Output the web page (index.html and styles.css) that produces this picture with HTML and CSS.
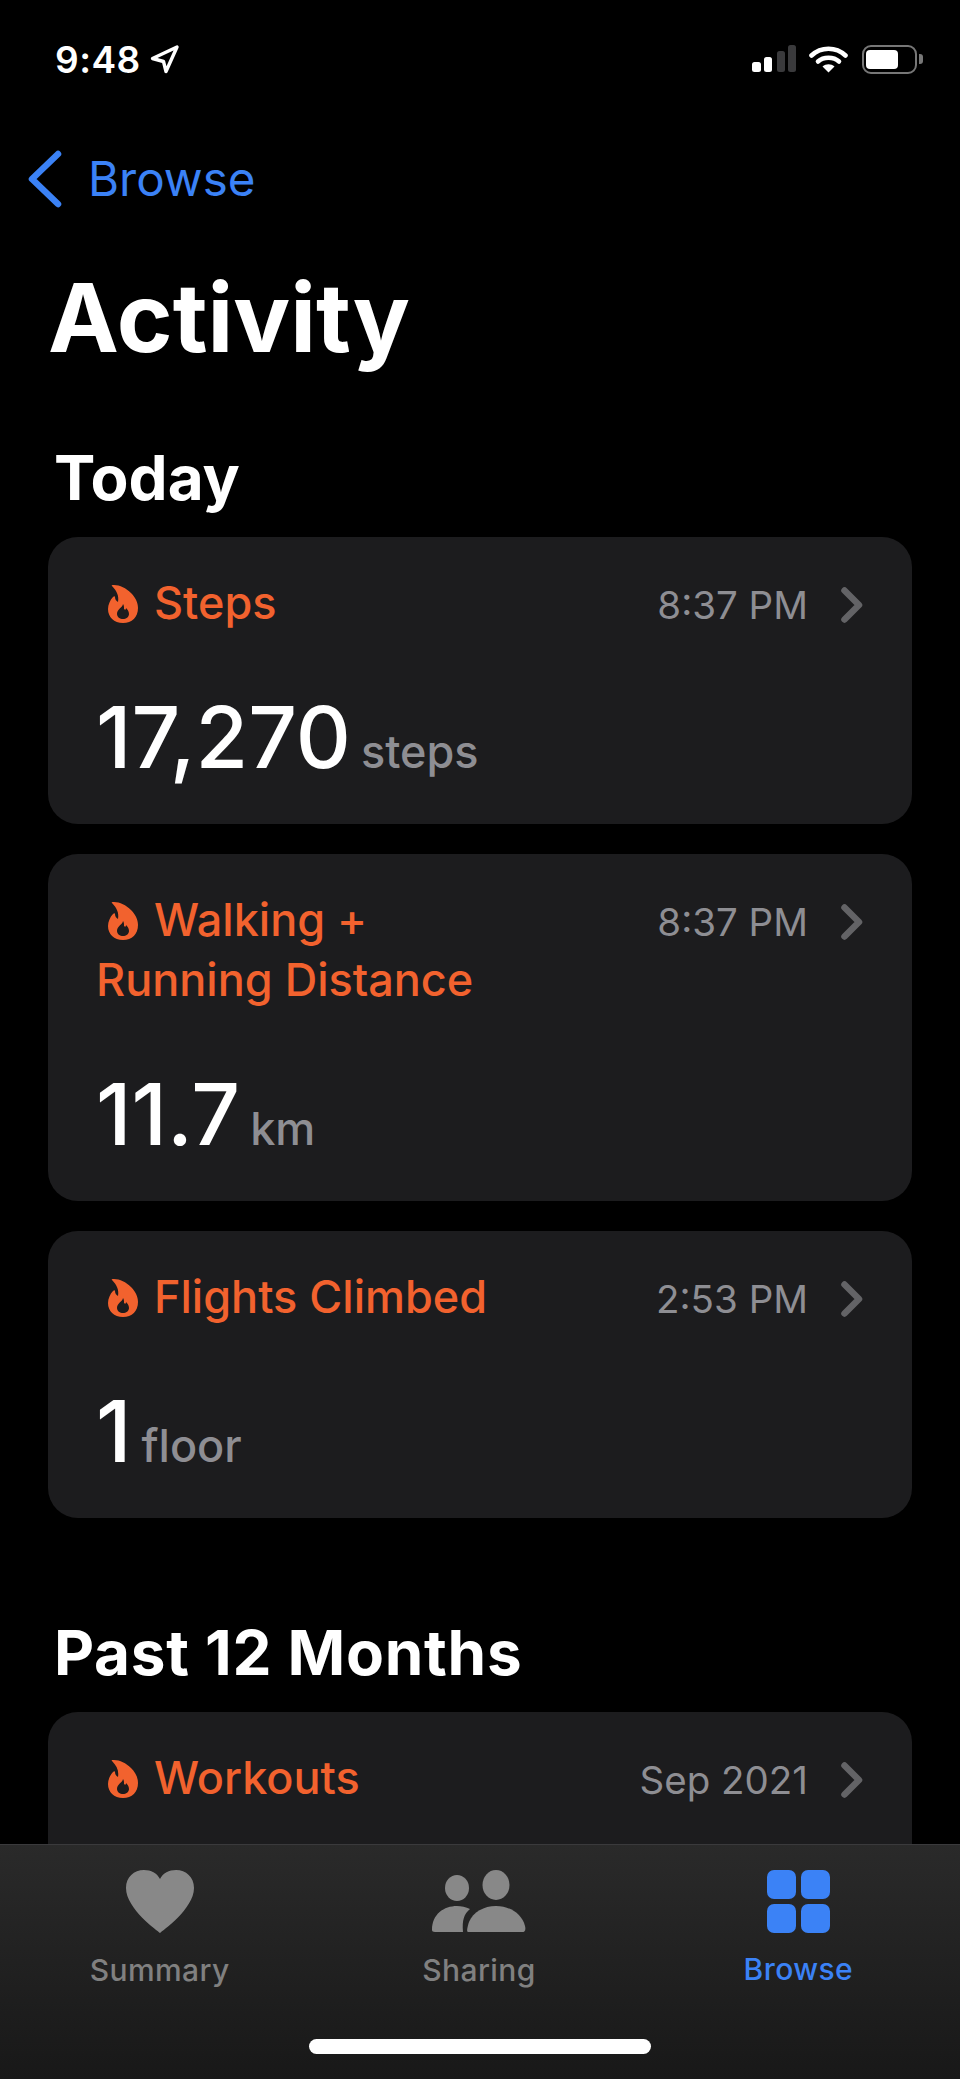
FILE: index.html
```html
<!DOCTYPE html>
<html lang="en">
<head>
<meta charset="UTF-8">
<meta name="viewport" content="width=device-width, initial-scale=1.0">
<title>Activity</title>
<link rel="stylesheet" href="styles.css">
</head>
<body>
<div class="phone">
	<div class="status">
		<div class="status-left">
			<span class="clock">9:48</span>
			<svg class="loc" viewBox="0 0 30 30"><path d="M2.500 14.500 27 3 16 27.500 13.500 17.500Z" fill="none" stroke="#fff" stroke-width="3.400" stroke-linejoin="round"/></svg>
		</div>
		<div class="status-right">
			<svg class="signal" viewBox="0 0 44 28"><rect x="0" y="17" width="9" height="10" rx="2.500" fill="#fff"/><rect x="12" y="12" width="8" height="15" rx="2.500" fill="#fff"/><rect x="25" y="6" width="8" height="21" rx="2.500" fill="#3a3a3c"/><rect x="36" y="0" width="8" height="27" rx="2.500" fill="#3a3a3c"/></svg>
			<svg class="wifi" viewBox="0 0 38 28"><path d="M2 10.500C11.500 1.500 26.500 1.500 36 10.500" fill="none" stroke="#fff" stroke-width="4.600" stroke-linecap="round"/><path d="M8.500 16.500C14 11.500 24 11.500 29.500 16.500" fill="none" stroke="#fff" stroke-width="4.600" stroke-linecap="round"/><path d="M13 21.500C16.500 18.500 21.500 18.500 25 21.500L19 27.500Z" fill="#fff"/></svg>
			<div class="battery"><div class="battery-fill"></div></div>
			<div class="battery-cap"></div>
		</div>
	</div>

	<a class="back">
		<svg class="back-icon" viewBox="0 0 36 58"><path d="M31 4 5 29 31 54" fill="none" stroke="#3b82f6" stroke-width="6.500" stroke-linecap="round" stroke-linejoin="round"/></svg>
		<span>Browse</span>
	</a>

	<h1 class="title">Activity</h1>

	<h2 class="section">Today</h2>
	<div class="card">
		<div class="card-head">
			<div class="card-title"><svg class="flame"><use href="#flame"/></svg>Steps</div>
			<div class="card-meta"><span>8:37 PM</span><svg class="chev"><use href="#chev"/></svg></div>
		</div>
		<div class="card-value"><b>17,270</b><span>steps</span></div>
	</div>
	<div class="card">
		<div class="card-head">
			<div class="card-title"><svg class="flame"><use href="#flame"/></svg>Walking +<br>Running Distance</div>
			<div class="card-meta"><span>8:37 PM</span><svg class="chev"><use href="#chev"/></svg></div>
		</div>
		<div class="card-value"><b>11.7</b><span>km</span></div>
	</div>
	<div class="card">
		<div class="card-head">
			<div class="card-title"><svg class="flame"><use href="#flame"/></svg>Flights Climbed</div>
			<div class="card-meta"><span>2:53 PM</span><svg class="chev"><use href="#chev"/></svg></div>
		</div>
		<div class="card-value"><b>1</b><span>floor</span></div>
	</div>

	<h2 class="section section-months">Past 12 Months</h2>
	<div class="card card-cut">
		<div class="card-head">
			<div class="card-title"><svg class="flame"><use href="#flame"/></svg>Workouts</div>
			<div class="card-meta"><span>Sep 2021</span><svg class="chev"><use href="#chev"/></svg></div>
		</div>
	</div>

	<div class="tabbar">
		<div class="tabs">
			<div class="tab">
				<svg class="tab-icon" viewBox="0 0 70 64"><path d="M35 63C33 61 1 39 1 18 1 7 9 0 19 0 26 0 32 3 35 9 38 3 44 0 51 0 61 0 69 7 69 18 69 39 37 61 35 63Z" fill="#888"/></svg>
				<span>Summary</span>
			</div>
			<div class="tab">
				<svg class="tab-icon tab-icon-wide" viewBox="0 0 94 64"><ellipse cx="25" cy="18" rx="12" ry="13" fill="#888"/><ellipse cx="64" cy="15" rx="13.500" ry="15" fill="#888"/><path d="M0 60C0 44 12 36 25 36 29 36 34 37 38 39 32 44 30 50 31 62H3C1 62 0 61 0 60Z" fill="#888"/><path d="M36 62C34 62 36 55 37 52 41 42 52 36 64 36 78 36 90 44 93 56 94 60 93 62 90 62Z" fill="#888"/></svg>
				<span>Sharing</span>
			</div>
			<div class="tab tab-on">
				<div class="grid-icon"><i></i><i></i><i></i><i></i></div>
				<span>Browse</span>
			</div>
		</div>
		<div class="home"></div>
	</div>
</div>

<svg class="defs" width="0" height="0">
	<symbol id="flame" viewBox="0 0 30 38">
		<path fill-rule="evenodd" d="M4 1C3 0 4 0 6 0 12 0 18 3 23 8 27 12 30 17 30 23 30 32 24 38 15 38 6 38 0 32 0 24 0 20 2 15 5 12 6 11 7 11 7 12 7 14 8 16 10 17 11 11 9 6 4 1ZM15 19C15 22 9 24 9 29 9 32 12 34 15 34 18 34 21 32 21 29 21 26 19 24 18 23 18 25 17 25 16 24 16 22 16 20 15 19Z"/>
	</symbol>
	<symbol id="chev" viewBox="0 0 22 36">
		<path d="M3.500 3.500 18 18 3.500 32.500" fill="none" stroke="#636366" stroke-width="6.500" stroke-linecap="round" stroke-linejoin="round"/>
	</symbol>
</svg>
</body>
</html>
```

FILE: styles.css
```css
* {
	margin: 0;
	padding: 0;
	box-sizing: border-box;
}
html, body {
	height: 100%;
	background: #000;
}
body {
	font-family: Inter, "Liberation Sans", sans-serif;
	color: #fff;
}
.defs {
	position: absolute;
}
.phone {
	position: relative;
	height: 2079px;
	padding: 0 48px;
	overflow: hidden;
}

/* status bar */
.status {
	display: flex;
	justify-content: space-between;
	align-items: center;
	height: 58px;
	margin: 30px 0 0;
	padding: 0 0 0 7px;
}
.status-left {
	display: flex;
	align-items: center;
	gap: 9px;
}
.clock {
	font-size: 37px;
	font-weight: 600;
	letter-spacing: 0.5px;
}
.loc {
	width: 30px;
	height: 30px;
}
.status-right {
	display: flex;
	align-items: center;
	margin-right: -11px;
}
.signal {
	width: 44px;
	height: 28px;
	margin-right: 13px;
}
.wifi {
	width: 39px;
	height: 28px;
	margin-right: 14px;
}
.battery {
	width: 55px;
	height: 29px;
	padding: 3px 2px;
	border: 2px solid #777;
	border-radius: 9px;
}
.battery-fill {
	width: 32px;
	height: 100%;
	background: #fff;
	border-radius: 4px;
}
.battery-cap {
	width: 4px;
	height: 10px;
	margin-left: 2px;
	background: #777;
	border-radius: 0 3px 3px 0;
}

/* nav */
.back {
	display: flex;
	align-items: center;
	gap: 25px;
	margin: 62px 0 0 -21px;
	color: #3b82f6;
	font-size: 47.5px;
	line-height: 58px;
}
.back-icon {
	width: 36px;
	height: 58px;
}
.title {
	margin: 55px 0 0;
	font-size: 95px;
	font-weight: 700;
	line-height: 110px;
}
.section {
	margin: 70px 0 0 6px;
	font-size: 62px;
	font-weight: 700;
	line-height: 70px;
}
.section-months {
	margin-top: 100px;
	letter-spacing: 0.7px;
}

/* cards */
.card {
	margin-top: 30px;
	padding: 38px 49px 36px 48px;
	background: #1c1c1e;
	border-radius: 30px;
}
.section + .card {
	margin-top: 24px;
}
.card-cut {
	min-height: 287px;
}
.card-head {
	display: flex;
	justify-content: space-between;
	align-items: flex-start;
}
.card-title {
	margin: -2px 0 2px;
	color: #f2622e;
	font-size: 45px;
	font-weight: 500;
	line-height: 60px;
}
.flame {
	width: 30px;
	height: 38px;
	margin: 0 16px 0 12px;
	fill: #f2622e;
	vertical-align: -4px;
}
.card-meta {
	display: flex;
	align-items: center;
	gap: 33px;
	height: 60px;
	color: #8e8e93;
	font-size: 38.5px;
}
.chev {
	width: 22px;
	height: 36px;
}
.card-value {
	display: flex;
	align-items: baseline;
	gap: 10px;
	margin-top: 51px;
}
.card-value b {
	font-size: 85.5px;
	font-weight: 500;
	line-height: 102px;
}
.card-value span {
	color: #8e8e93;
	font-size: 45px;
	font-weight: 500;
}

/* tab bar */
.tabbar {
	position: absolute;
	left: 0;
	right: 0;
	bottom: 0;
	height: 235px;
	border-top: 1px solid #3a3a3c;
	background: linear-gradient(#2a2a2a, #181818);
}
.tabs {
	display: flex;
	padding: 25px 2px 0 0;
}
.tab {
	flex: 1;
	display: flex;
	flex-direction: column;
	align-items: center;
	color: #808080;
	font-size: 30px;
	font-weight: 500;
	letter-spacing: 0.4px;
}
.tab-icon {
	width: 70px;
	height: 64px;
	margin-bottom: 18px;
}
.tab-icon-wide {
	width: 94px;
}
.tab-on {
	color: #3b82f6;
}
.grid-icon {
	display: grid;
	grid-template-columns: 29px 29px;
	grid-auto-rows: 29px;
	gap: 5px;
	margin-bottom: 18px;
}
.grid-icon i {
	background: #3b82f6;
	border-radius: 7px;
}
.home {
	position: absolute;
	left: 309px;
	bottom: 25px;
	width: 342px;
	height: 15px;
	background: #fff;
	border-radius: 8px;
}
```
